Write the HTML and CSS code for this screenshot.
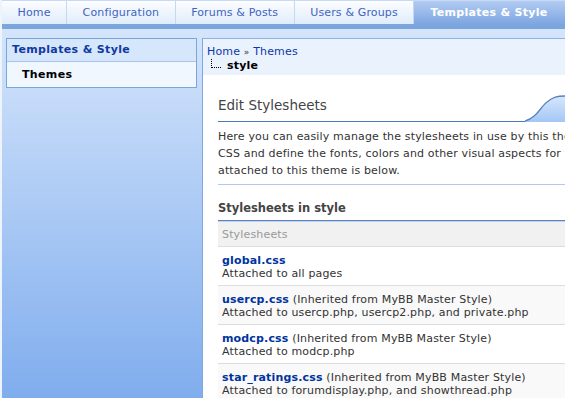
FILE: index.html
```html
<!DOCTYPE html>
<html lang="en">
<head>
<meta charset="UTF-8" />
<title>Edit Stylesheets</title>
<link rel="stylesheet" href="styles.css">
</head>
<body>
<div class="wrap">

  <!-- TOP MENU -->
  <div class="tabs">
    <a class="tab" href="#">Home</a>
    <a class="tab" href="#">Configuration</a>
    <a class="tab" href="#">Forums &amp; Posts</a>
    <a class="tab" href="#">Users &amp; Groups</a>
    <a class="tab active" href="#">Templates &amp; Style</a>
  </div>
  <div class="tab-bar"></div>

  <div class="page">
    <!-- SIDEBAR -->
    <div class="sidebar">
      <div class="side-box">
        <div class="side-title">Templates &amp; Style</div>
        <div class="side-item">Themes</div>
      </div>
    </div>

    <!-- CONTENT -->
    <div class="content">
      <div class="breadcrumb">
        <div class="crumbs"><a href="#">Home</a> <span class="raquo">&raquo;</span> <a href="#">Themes</a></div>
        <div class="current"><span class="tree"></span>style</div>
      </div>

      <div class="inner">
        <h2 class="title">Edit Stylesheets
          <svg class="swoosh" width="62" height="34" viewBox="0 0 62 34">
            <defs>
              <linearGradient id="sw" x1="0" y1="0" x2="0" y2="1">
                <stop offset="0" stop-color="#d6e7fc" />
                <stop offset="1" stop-color="#a4c7f5" />
              </linearGradient>
            </defs>
            <path d="M0,33 C12,30 16,18 22,14 C28,9 32,8 40,8 L62,8 L62,34 L0,34 Z" fill="url(#sw)" />
            <path d="M0,33 C12,30 16,18 22,14 C28,9 32,8 40,8 L62,8" fill="none" stroke="#5b82c0" stroke-width="1.3" />
          </svg>
        </h2>
        <p class="intro">Here you can easily manage the stylesheets in use by this theme. Stylesheets are based on<br>CSS and define the fonts, colors and other visual aspects for this theme. A list of stylesheets<br>attached to this theme is below.</p>

        <h3 class="subtitle">Stylesheets in style</h3>
        <table class="sheets">
          <thead>
            <tr><th>Stylesheets</th></tr>
          </thead>
          <tbody>
            <tr><td><a class="name" href="#">global.css</a><br>Attached to all pages</td></tr>
            <tr class="alt"><td><a class="name" href="#">usercp.css</a> (Inherited from MyBB Master Style)<br>Attached to usercp.php, usercp2.php, and private.php</td></tr>
            <tr><td><a class="name" href="#">modcp.css</a> (Inherited from MyBB Master Style)<br>Attached to modcp.php</td></tr>
            <tr class="alt"><td><a class="name" href="#">star_ratings.css</a> (Inherited from MyBB Master Style)<br>Attached to forumdisplay.php, and showthread.php</td></tr>
          </tbody>
        </table>
      </div>
    </div>
  </div>

</div>
</body>
</html>
```

FILE: styles.css
```css
* {
  box-sizing: border-box;
}
body {
  margin: 0;
  height: 398px;
  overflow: hidden;
  background: #eef4fc;
  font: 11px "DejaVu Sans", Verdana, sans-serif;
  color: #333;
}
a {
  text-decoration: none;
}
.wrap {
  margin-left: 2px;
  width: 900px;
}

/* TABS */
.tabs {
  display: flex;
  height: 24px;
  border-top: 1px solid #c7d9f3;
}
.tab {
  padding: 0 15.5px;
  line-height: 23px;
  letter-spacing: 0.15px;
  color: #4064c2;
  background: linear-gradient(#fcfdff, #e0ecfb);
  border-right: 1px solid #c4d8f4;
}
.tab.active {
  padding-left: 16px;
  background: linear-gradient(#b2ccf2, #7ea6e2);
  color: #fff;
  font-weight: bold;
  letter-spacing: 0.3px;
  border-right: none;
  flex: 1;
}
.tab-bar {
  height: 5px;
  background: #7ba5dd;
}

/* PAGE */
.page {
  display: flex;
  height: 369px;
  background: linear-gradient(#d4e5fb, #80adee);
}
.sidebar {
  width: 200px;
  flex: none;
}
.side-box {
  margin: 9px 0 0 4px;
  width: 191px;
  border: 1px solid #7aa5dd;
}
.side-title {
  height: 23px;
  line-height: 22px;
  padding-left: 5px;
  background: #d6e6fb;
  color: #0f3a9f;
  font-weight: bold;
  letter-spacing: 0.35px;
  border-bottom: 1px solid #a5c5f0;
}
.side-item {
  line-height: 25px;
  padding-left: 15px;
  background: #f0f7ff;
  font-weight: bold;
  letter-spacing: 0.35px;
  color: #000;
}

/* CONTENT */
.content {
  flex: 1;
  margin-top: 9px;
  background: #fff;
  border-left: 1px solid #7fa8e2;
  border-top: 1px solid #8db2e6;
  letter-spacing: 0.16px;
}
.breadcrumb {
  height: 36px;
  padding: 6px 4px 0;
  background: #eaf2fd;
  line-height: 14px;
}
.breadcrumb a {
  color: #0b3aa8;
}
.raquo {
  font-size: 9px;
  color: #333;
}
.current {
  font-weight: bold;
  color: #000;
}
.tree {
  display: inline-block;
  width: 10px;
  height: 9px;
  margin: 0 6px 0 4px;
  border-left: 1px dotted #000;
  border-bottom: 1px dotted #000;
  vertical-align: 1px;
}
.inner {
  padding-left: 15px;
}
.title {
  position: relative;
  margin: 0;
  padding: 22px 0 7px;
  font-size: 13.5px;
  line-height: 17px;
  font-weight: normal;
  letter-spacing: 0;
  color: #444;
  border-bottom: 1px solid #4f78b8;
}
.swoosh {
  position: absolute;
  left: 307px;
  bottom: -1px;
}
.intro {
  margin: 0;
  padding: 6px 0 5px;
  line-height: 17px;
  white-space: nowrap;
  border-bottom: 1px solid #aecbef;
}
.subtitle {
  margin: 0;
  padding: 16px 0 5px;
  font-size: 11.5px;
  line-height: 14px;
  letter-spacing: 0;
  color: #444;
  border-bottom: 1px solid #5a82c2;
}

/* STYLESHEET TABLE */
.sheets {
  width: 100%;
  border-collapse: collapse;
}
.sheets th {
  height: 25px;
  padding: 0 4px;
  text-align: left;
  font-weight: normal;
  color: #999;
  background: #f1f1f1;
  border-top: 1px solid #c3d3ea;
  border-bottom: 1px solid #ddd;
}
.sheets td {
  padding: 7px 4px 5px;
  line-height: 13px;
  white-space: nowrap;
  border-bottom: 1px solid #ddd;
}
.sheets tr.alt td {
  background: #f9f9f9;
}
.name {
  color: #0033a0;
  font-weight: bold;
}
```
